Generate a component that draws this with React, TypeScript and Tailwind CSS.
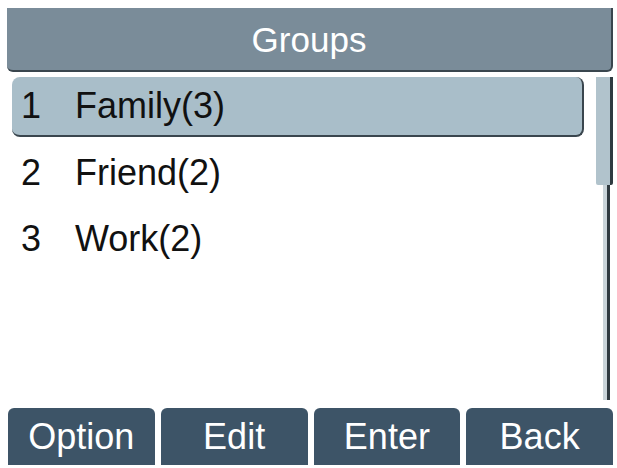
const groups = [
  { id: 1, name: "Family(3)" },
  { id: 2, name: "Friend(2)" },
  { id: 3, name: "Work(2)" },
];

const softkeys = ["Option", "Edit", "Enter", "Back"];

export default function App() {
  const selected = 1;

  return (
    <div
      className="w-[617px] h-[468px] bg-white flex flex-col overflow-hidden"
      style={{ fontFamily: '"Liberation Sans", Arial, sans-serif' }}
    >
      {/* title bar */}
      <div className="pt-[8px] pl-[7px] pr-[4px]">
        <div className="h-[64px] bg-[#7a8c99] rounded-b-[6px] border-b-2 border-r-2 border-[#3a464e] flex items-center justify-center">
          <span className="text-white text-[35px] leading-none">Groups</span>
        </div>
      </div>

      {/* list + scrollbar */}
      <div className="flex-1 flex pt-[5px] pl-[12px]">
        <div className="w-[572px] flex flex-col gap-[6px]">
          {groups.map((g) => (
            <div
              key={g.id}
              className={
                g.id === selected
                  ? "h-[60px] flex items-center pl-[9px] bg-[#a9bec9] rounded-[8px] border-r-2 border-b-2 border-[#3a464e] text-[#111] text-[36px]"
                  : "h-[60px] flex items-center pl-[9px] text-[#111] text-[36px]"
              }
            >
              <span className="w-[54px]">{g.id}</span>
              <span>{g.name}</span>
            </div>
          ))}
        </div>

        <div className="ml-[12px] w-[17px] flex flex-col items-center pb-[8px]">
          <div className="w-[17px] h-[108px] bg-[#b1c3cc] border-r-[3px] border-[#2f3a40] rounded-b-[2px]"></div>
          <div className="flex-1 w-[7px] ml-[4px] bg-[#c9d4d9] border-r-[3px] border-[#2f3a40]"></div>
        </div>
      </div>

      {/* soft keys */}
      <div className="h-[60px] flex gap-[6px] pl-[8px] pr-[4px] pb-[3px]">
        {softkeys.map((k) => (
          <div
            key={k}
            className="flex-1 bg-[#3d5467] rounded-t-[6px] flex items-center justify-center text-white text-[36px] leading-none"
          >
            {k}
          </div>
        ))}
      </div>
    </div>
  );
}
